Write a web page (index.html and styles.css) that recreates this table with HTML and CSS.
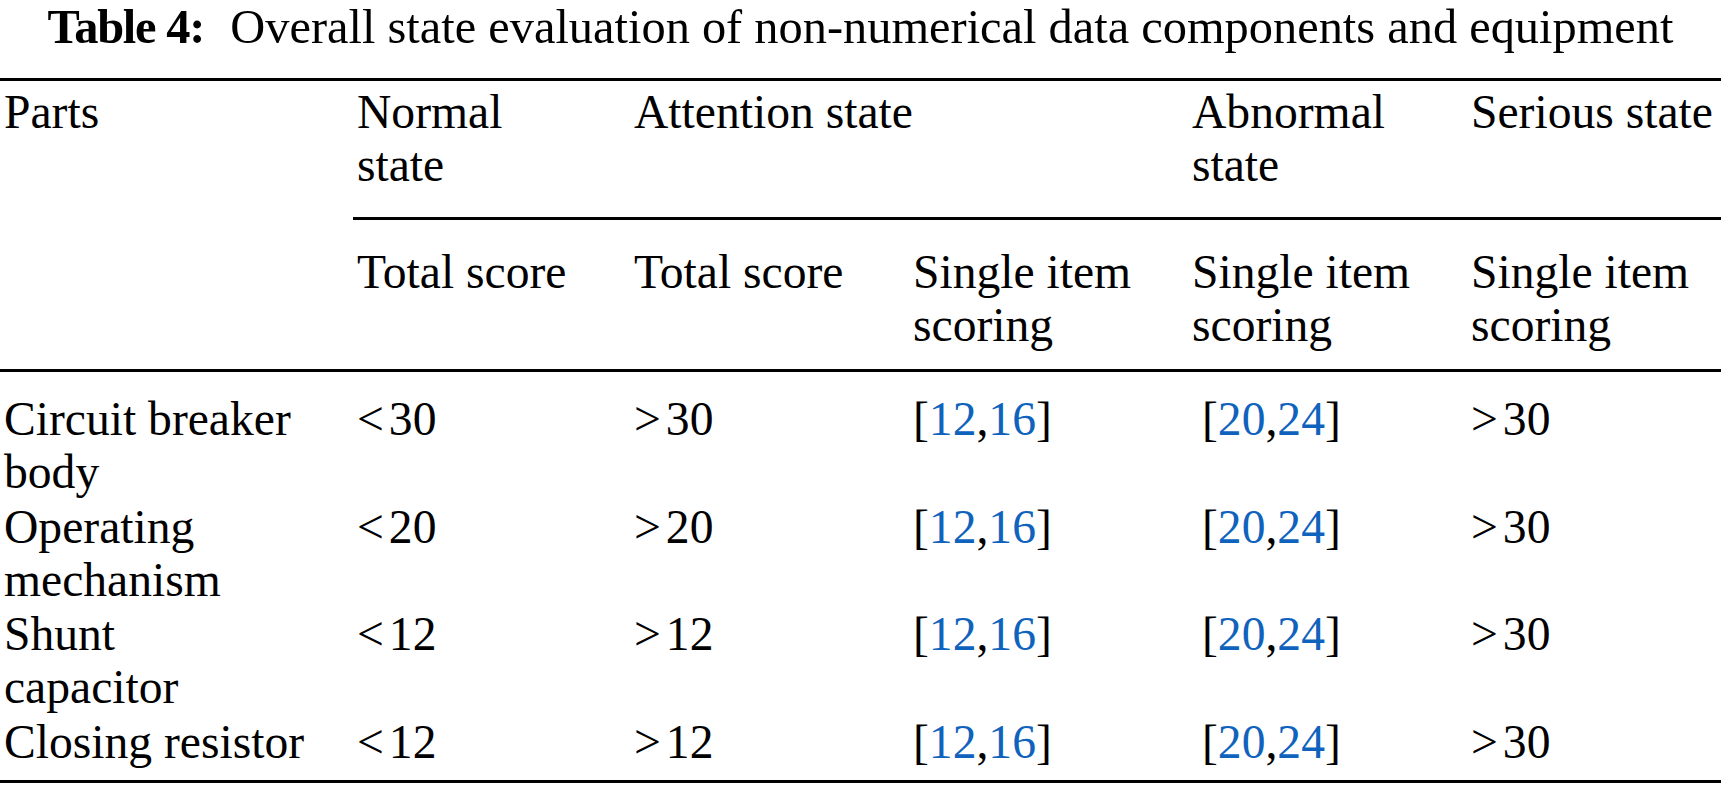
FILE: index.html
```html
<!DOCTYPE html>
<html lang="en">
<head>
<meta charset="utf-8">
<title>Table 4</title>
<link rel="stylesheet" href="styles.css">
</head>
<body>
<div class="figure">
  <p class="caption"><span class="caption-label">Table 4:</span> Overall state evaluation of non-numerical data components and equipment</p>
  <table class="state-table">
    <colgroup>
      <col class="col-part">
      <col class="col-normal">
      <col class="col-att1">
      <col class="col-att2">
      <col class="col-abn">
      <col class="col-ser">
    </colgroup>
    <thead>
      <tr class="head-top">
        <th class="cell-part">Parts</th>
        <th class="ruled">Normal<br>state</th>
        <th class="ruled" colspan="2">Attention state</th>
        <th class="ruled">Abnormal<br>state</th>
        <th class="ruled">Serious state</th>
      </tr>
      <tr class="head-sub">
        <th class="cell-part"></th>
        <th>Total score</th>
        <th>Total score</th>
        <th>Single item<br>scoring</th>
        <th>Single item<br>scoring</th>
        <th>Single item<br>scoring</th>
      </tr>
    </thead>
    <tbody>
      <tr>
        <td class="cell-part">Circuit breaker<br>body</td>
        <td><span class="rel">&lt;</span>30</td>
        <td><span class="rel">&gt;</span>30</td>
        <td>[<span class="ref">12</span>,<span class="ref">16</span>]</td>
        <td class="shift">[<span class="ref">20</span>,<span class="ref">24</span>]</td>
        <td><span class="rel">&gt;</span>30</td>
      </tr>
      <tr>
        <td class="cell-part">Operating<br>mechanism</td>
        <td><span class="rel">&lt;</span>20</td>
        <td><span class="rel">&gt;</span>20</td>
        <td>[<span class="ref">12</span>,<span class="ref">16</span>]</td>
        <td class="shift">[<span class="ref">20</span>,<span class="ref">24</span>]</td>
        <td><span class="rel">&gt;</span>30</td>
      </tr>
      <tr>
        <td class="cell-part">Shunt<br>capacitor</td>
        <td><span class="rel">&lt;</span>12</td>
        <td><span class="rel">&gt;</span>12</td>
        <td>[<span class="ref">12</span>,<span class="ref">16</span>]</td>
        <td class="shift">[<span class="ref">20</span>,<span class="ref">24</span>]</td>
        <td><span class="rel">&gt;</span>30</td>
      </tr>
      <tr>
        <td class="cell-part">Closing resistor</td>
        <td><span class="rel">&lt;</span>12</td>
        <td><span class="rel">&gt;</span>12</td>
        <td>[<span class="ref">12</span>,<span class="ref">16</span>]</td>
        <td class="shift">[<span class="ref">20</span>,<span class="ref">24</span>]</td>
        <td><span class="rel">&gt;</span>30</td>
      </tr>
    </tbody>
  </table>
</div>
</body>
</html>
```
FILE: styles.css
```css
html,
body {
  margin: 0;
  padding: 0;
  background: #ffffff;
}

body {
  font-family: "Liberation Serif", "Times New Roman", serif;
  font-size: 47.6px;
  line-height: 53px;
  color: #000000;
}

.figure {
  width: 1721px;
}

.caption {
  margin: 0 0 25px;
  font-size: 48.4px;
  line-height: 53px;
  text-align: center;
  white-space: nowrap;
}

.caption-label {
  font-weight: bold;
  letter-spacing: -1.2px;
  margin-right: 14px;
}

.state-table {
  width: 1721px;
  border-collapse: collapse;
  table-layout: fixed;
  border-top: 3px solid #000000;
  border-bottom: 3px solid #000000;
}

.col-part { width: 353px; }
.col-normal { width: 277px; }
.col-att1 { width: 279px; }
.col-att2 { width: 279px; }
.col-abn { width: 279px; }
.col-ser { width: 254px; }

.state-table th,
.state-table td {
  padding: 0 0 0 4px;
  text-align: left;
  vertical-align: top;
  font-weight: normal;
  white-space: nowrap;
}

.head-top th {
  padding-top: 5px;
  padding-bottom: 25px;
}

.head-top th.ruled {
  border-bottom: 3px solid #000000;
}

.head-sub th {
  padding-top: 26px;
  padding-bottom: 17px;
  border-bottom: 3px solid #000000;
}

.state-table tbody td {
  padding-bottom: 1.5px;
}

.state-table tbody tr:first-child td {
  padding-top: 21px;
}

.state-table tbody tr:last-child td {
  padding-bottom: 11px;
}

.state-table td.shift {
  padding-left: 14px;
}

.rel {
  margin-right: 5px;
}

.ref {
  color: #0f63bd;
}
```
